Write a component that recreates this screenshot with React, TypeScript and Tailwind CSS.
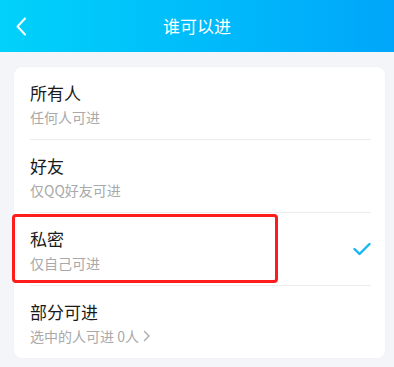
import React from "react";

const rows = [
  { title: "所有人", sub: "任何人可进" },
  { title: "好友", sub: "仅QQ好友可进" },
  { title: "私密", sub: "仅自己可进", checked: true, marked: true },
  { title: "部分可进", sub: "选中的人可进 0人", arrow: true },
];

export default function App() {
  return (
    <div
      className="w-[394px] h-[367px] bg-[#f4f5f9] overflow-hidden"
      style={{ fontFamily: '"Noto Sans CJK SC", "Noto Sans", sans-serif' }}
    >
      <div className="h-[52px] bg-gradient-to-r from-[#02d2fa] to-[#00a6fa] flex items-center relative">
        <svg
          className="absolute left-[15px] top-[17px]"
          width="12"
          height="19"
          viewBox="0 0 12 19"
        >
          <path d="M10 1.5 L2.5 9.5 L10 17.5" fill="none" stroke="#fff" strokeWidth="2" strokeLinecap="round" strokeLinejoin="round" />
        </svg>
        <div className="w-full text-center text-white text-[17px] leading-[22px]">谁可以进</div>
      </div>
      <div className="pt-[15px] pl-[14px]">
        <div className="w-[371px] bg-white rounded-[8px] shadow-[0_0_2px_rgba(0,0,0,0.04)]">
          {rows.map((r, i) => (
            <div key={i} className="relative pl-[16px] pr-[14px]">
              <div
                className={
                  "flex items-center justify-between " +
                  (i < rows.length - 1 ? "border-b border-[#ededed] h-[73px]" : "h-[72px]")
                }
              >
                <div className="flex flex-col pt-[3px]">
                  <div className="text-[17px] leading-[22px] text-[#1a1a1a]">{r.title}</div>
                  <div className="mt-[3px] text-[14px] leading-[20px] text-[#a9a9a9] flex items-center">
                    {r.sub}
                    {r.arrow && (
                      <svg className="ml-[4px]" width="8" height="12" viewBox="0 0 8 12">
                        <path d="M1.5 1.5 L6 6 L1.5 10.5" fill="none" stroke="#a9a9a9" strokeWidth="1.4" strokeLinecap="round" strokeLinejoin="round" />
                      </svg>
                    )}
                  </div>
                </div>
                {r.checked && (
                  <svg width="18" height="14" viewBox="0 0 18 14" className="mr-[0px]">
                    <path d="M1.5 7 L6.5 12 L16.5 2" fill="none" stroke="#12b7f5" strokeWidth="2.4" strokeLinecap="round" strokeLinejoin="round" />
                  </svg>
                )}
              </div>
              {r.marked && (
                <div className="absolute left-[-2px] top-[1px] w-[266px] h-[69px] border-[3px] border-[#ff1c1c] rounded-[4px]" />
              )}
            </div>
          ))}
        </div>
      </div>
    </div>
  );
}
